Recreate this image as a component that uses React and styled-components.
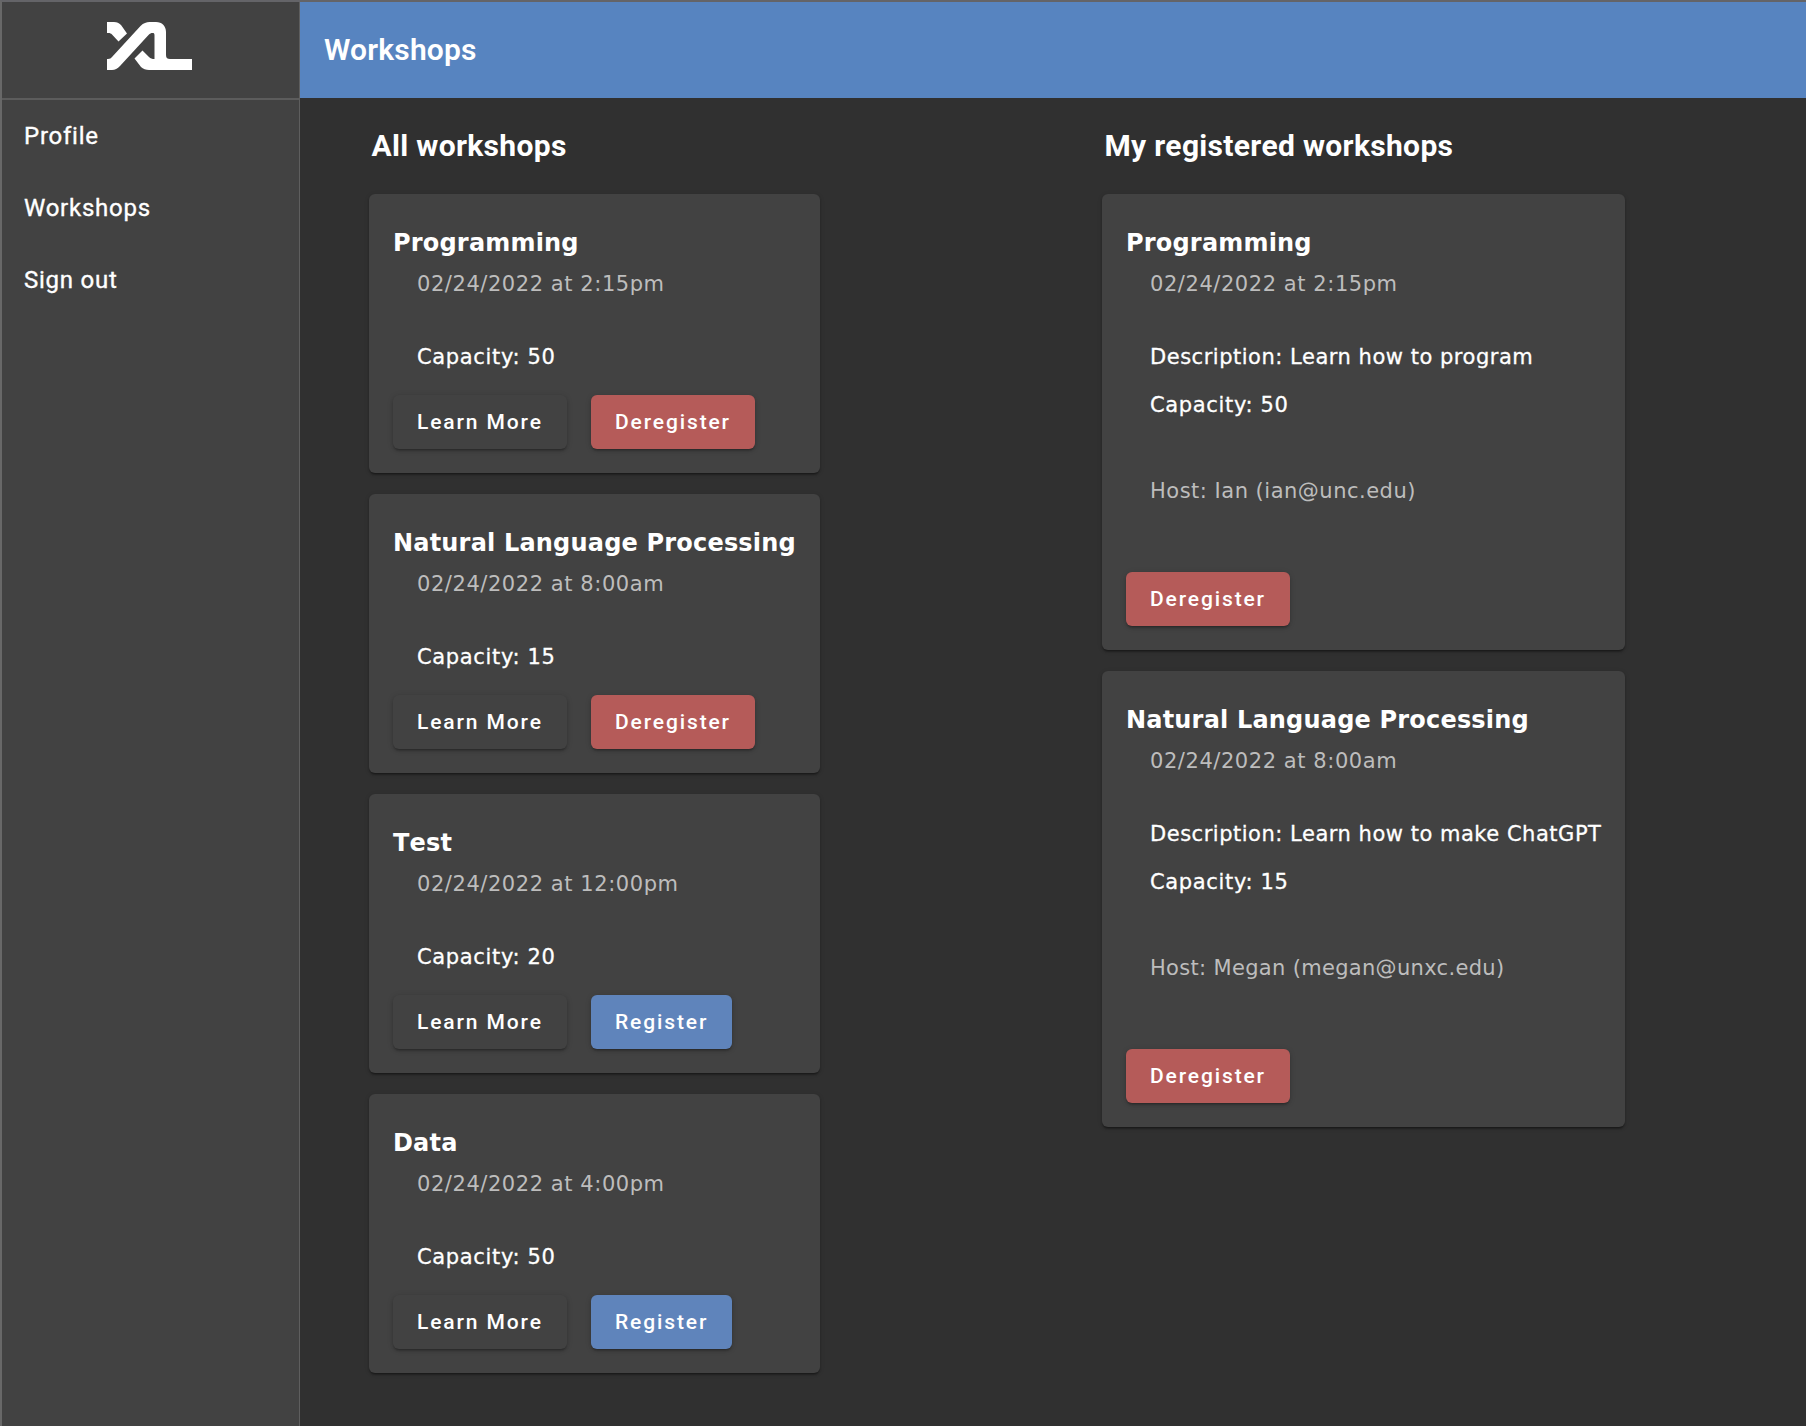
import React from "react";
import styled, { createGlobalStyle } from "styled-components";

const GlobalStyle = createGlobalStyle`
  * { box-sizing: border-box; }
  body {
    margin: 0;
    background: #303030;
    color: #fff;
    font-family: Roboto, sans-serif;
  }
`;

const Page = styled.div`
  display: flex;
  height: 1426px;
  overflow: hidden;
  border-top: 2px solid #646468;
  border-left: 2px solid #686868;
`;

const Sidebar = styled.aside`
  width: 298px;
  flex: none;
  background: #424242;
  border-right: 1px solid #5e5e5e;
`;

const Brand = styled.div`
  height: 98px;
  padding: 20px 0 0 105px;
  border-bottom: 2px solid #5c5c5c;
`;

const Logo = styled.svg`
  display: block;
  width: 85px;
  height: 48px;
  fill: #fff;
`;

const NavItem = styled.a`
  display: flex;
  align-items: center;
  height: 72px;
  padding-left: 22px;
  font-size: 24px;
  letter-spacing: 0.75px;
  -webkit-text-stroke: 0.35px #fff;
`;

const Main = styled.main`
  flex: 1;
`;

const TopBar = styled.header`
  display: flex;
  align-items: center;
  height: 96px;
  padding: 0 0 2px 24px;
  background: #5784c0;
  font-size: 30px;
  font-weight: 600;
  letter-spacing: 0.2px;
`;

const Columns = styled.div`
  display: grid;
  grid-template-columns: 733px 733px;
  padding: 24px 0 0 69px;
`;

const Column = styled.section`
  display: flex;
  flex-direction: column;
  align-items: flex-start;
  gap: 21px;
`;

const ColumnTitle = styled.h2`
  margin: 0 0 3px;
  padding-left: 2.5px;
  height: 48px;
  line-height: 48px;
  font-size: 30px;
  font-weight: 700;
  letter-spacing: 0.33px;
`;

const Card = styled.article`
  width: ${(p) => p.$width}px;
  padding: 24px;
  border-radius: 6px;
  background: #424242;
  box-shadow: 0 3px 2px -2px rgba(0, 0, 0, 0.3), 0 2px 2px rgba(0, 0, 0, 0.2),
    0 1px 5px rgba(0, 0, 0, 0.14);
  font-family: Verdana, "DejaVu Sans", sans-serif;
  font-size: 21px;
  letter-spacing: 0.65px;
  white-space: nowrap;
`;

const CardTitle = styled.h3`
  margin: 0;
  line-height: 50px;
  font-size: 24px;
  font-weight: 700;
  font-kerning: none;
  letter-spacing: 0.19px;
`;

const When = styled.div`
  padding-left: 24px;
  line-height: 32px;
  color: #bdbdbd;
  letter-spacing: 0.56px;
`;

const Details = styled.div`
  margin-top: 33px;
  padding-left: 24px;
  line-height: 48px;
  -webkit-text-stroke: 0.3px #fff;
`;

const Description = styled.div`
  letter-spacing: 0.52px;
`;

const Host = styled.div`
  margin: 38px 0 57px;
  padding-left: 24px;
  line-height: 48px;
  color: #bdbdbd;
  letter-spacing: ${(p) => p.$tracking}px;
`;

const Actions = styled.div`
  display: flex;
  gap: 24px;
  margin-top: ${(p) => p.$top || 0}px;
`;

const fills = { plain: "#424242", danger: "#b55b59", primary: "#5f84bb" };
const widths = { plain: 174, danger: 164, primary: 141 };

const Button = styled.button`
  width: ${(p) => widths[p.$kind]}px;
  height: 54px;
  padding: 0 0 0 24px;
  border: 0;
  border-radius: 6px;
  background: ${(p) => fills[p.$kind]};
  box-shadow: 0 3px 2px -2px rgba(0, 0, 0, 0.2), 0 2px 3px rgba(0, 0, 0, 0.16),
    0 1px 6px rgba(0, 0, 0, 0.12);
  color: #fff;
  font: 500 21px Roboto, sans-serif;
  letter-spacing: 1.875px;
  text-align: left;
  white-space: nowrap;
`;

const workshops = [
  { name: "Programming", time: "2:15pm", capacity: 50, registered: true, about: "Learn how to program", host: "Ian (ian@unc.edu)", tracking: 0.5 },
  { name: "Natural Language Processing", time: "8:00am", capacity: 15, registered: true, about: "Learn how to make ChatGPT", host: "Megan (megan@unxc.edu)", tracking: 0.32 },
  { name: "Test", time: "12:00pm", capacity: 20 },
  { name: "Data", time: "4:00pm", capacity: 50 },
];

function WorkshopCard({ item }) {
  return (
    <Card $width={451}>
      <CardTitle>{item.name}</CardTitle>
      <When>{`02/24/2022 at ${item.time}`}</When>
      <Details>{`Capacity: ${item.capacity}`}</Details>
      <Actions $top={14}>
        <Button $kind="plain">Learn More</Button>
        {item.registered ? (
          <Button $kind="danger">Deregister</Button>
        ) : (
          <Button $kind="primary">Register</Button>
        )}
      </Actions>
    </Card>
  );
}

function RegisteredCard({ item }) {
  return (
    <Card $width={523}>
      <CardTitle>{item.name}</CardTitle>
      <When>{`02/24/2022 at ${item.time}`}</When>
      <Details>
        <Description>{`Description: ${item.about}`}</Description>
        <div>{`Capacity: ${item.capacity}`}</div>
      </Details>
      <Host $tracking={item.tracking}>{`Host: ${item.host}`}</Host>
      <Actions>
        <Button $kind="danger">Deregister</Button>
      </Actions>
    </Card>
  );
}

export default function App() {
  return (
    <>
      <GlobalStyle />
      <Page>
        <Sidebar>
          <Brand>
            <Logo viewBox="107 22 85 48">
              <path d="M107 22h7c3 0 5 1 7 3l6 8.500-8.500 8L112 34.500c-1-1-2-1.500-3.500-1.500H107z" />
              <path d="M107 59h1c2 0 3-1 4-2L140.500 26c3-3 6-4 9-4h6.500c6 0 10 4 10 10v23c0 3 1.500 4 4 4h22v11h-43c-3 0-6-1-8-3l-6.500-8.500 8-8L149 57c1.500 1.500 3 2 5.500 2V35.500c0-2-.5-2.500-2-2.500s-2.500.5-4 2L120 66c-2.500 2.700-5 4-8 4h-5z" />
            </Logo>
          </Brand>
          <nav>
            <NavItem>Profile</NavItem>
            <NavItem>Workshops</NavItem>
            <NavItem>Sign out</NavItem>
          </nav>
        </Sidebar>
        <Main>
          <TopBar>Workshops</TopBar>
          <Columns>
            <Column>
              <ColumnTitle>All workshops</ColumnTitle>
              {workshops.map((w) => (
                <WorkshopCard key={w.name} item={w} />
              ))}
            </Column>
            <Column>
              <ColumnTitle>My registered workshops</ColumnTitle>
              {workshops
                .filter((w) => w.registered)
                .map((w) => (
                  <RegisteredCard key={w.name} item={w} />
                ))}
            </Column>
          </Columns>
        </Main>
      </Page>
    </>
  );
}
